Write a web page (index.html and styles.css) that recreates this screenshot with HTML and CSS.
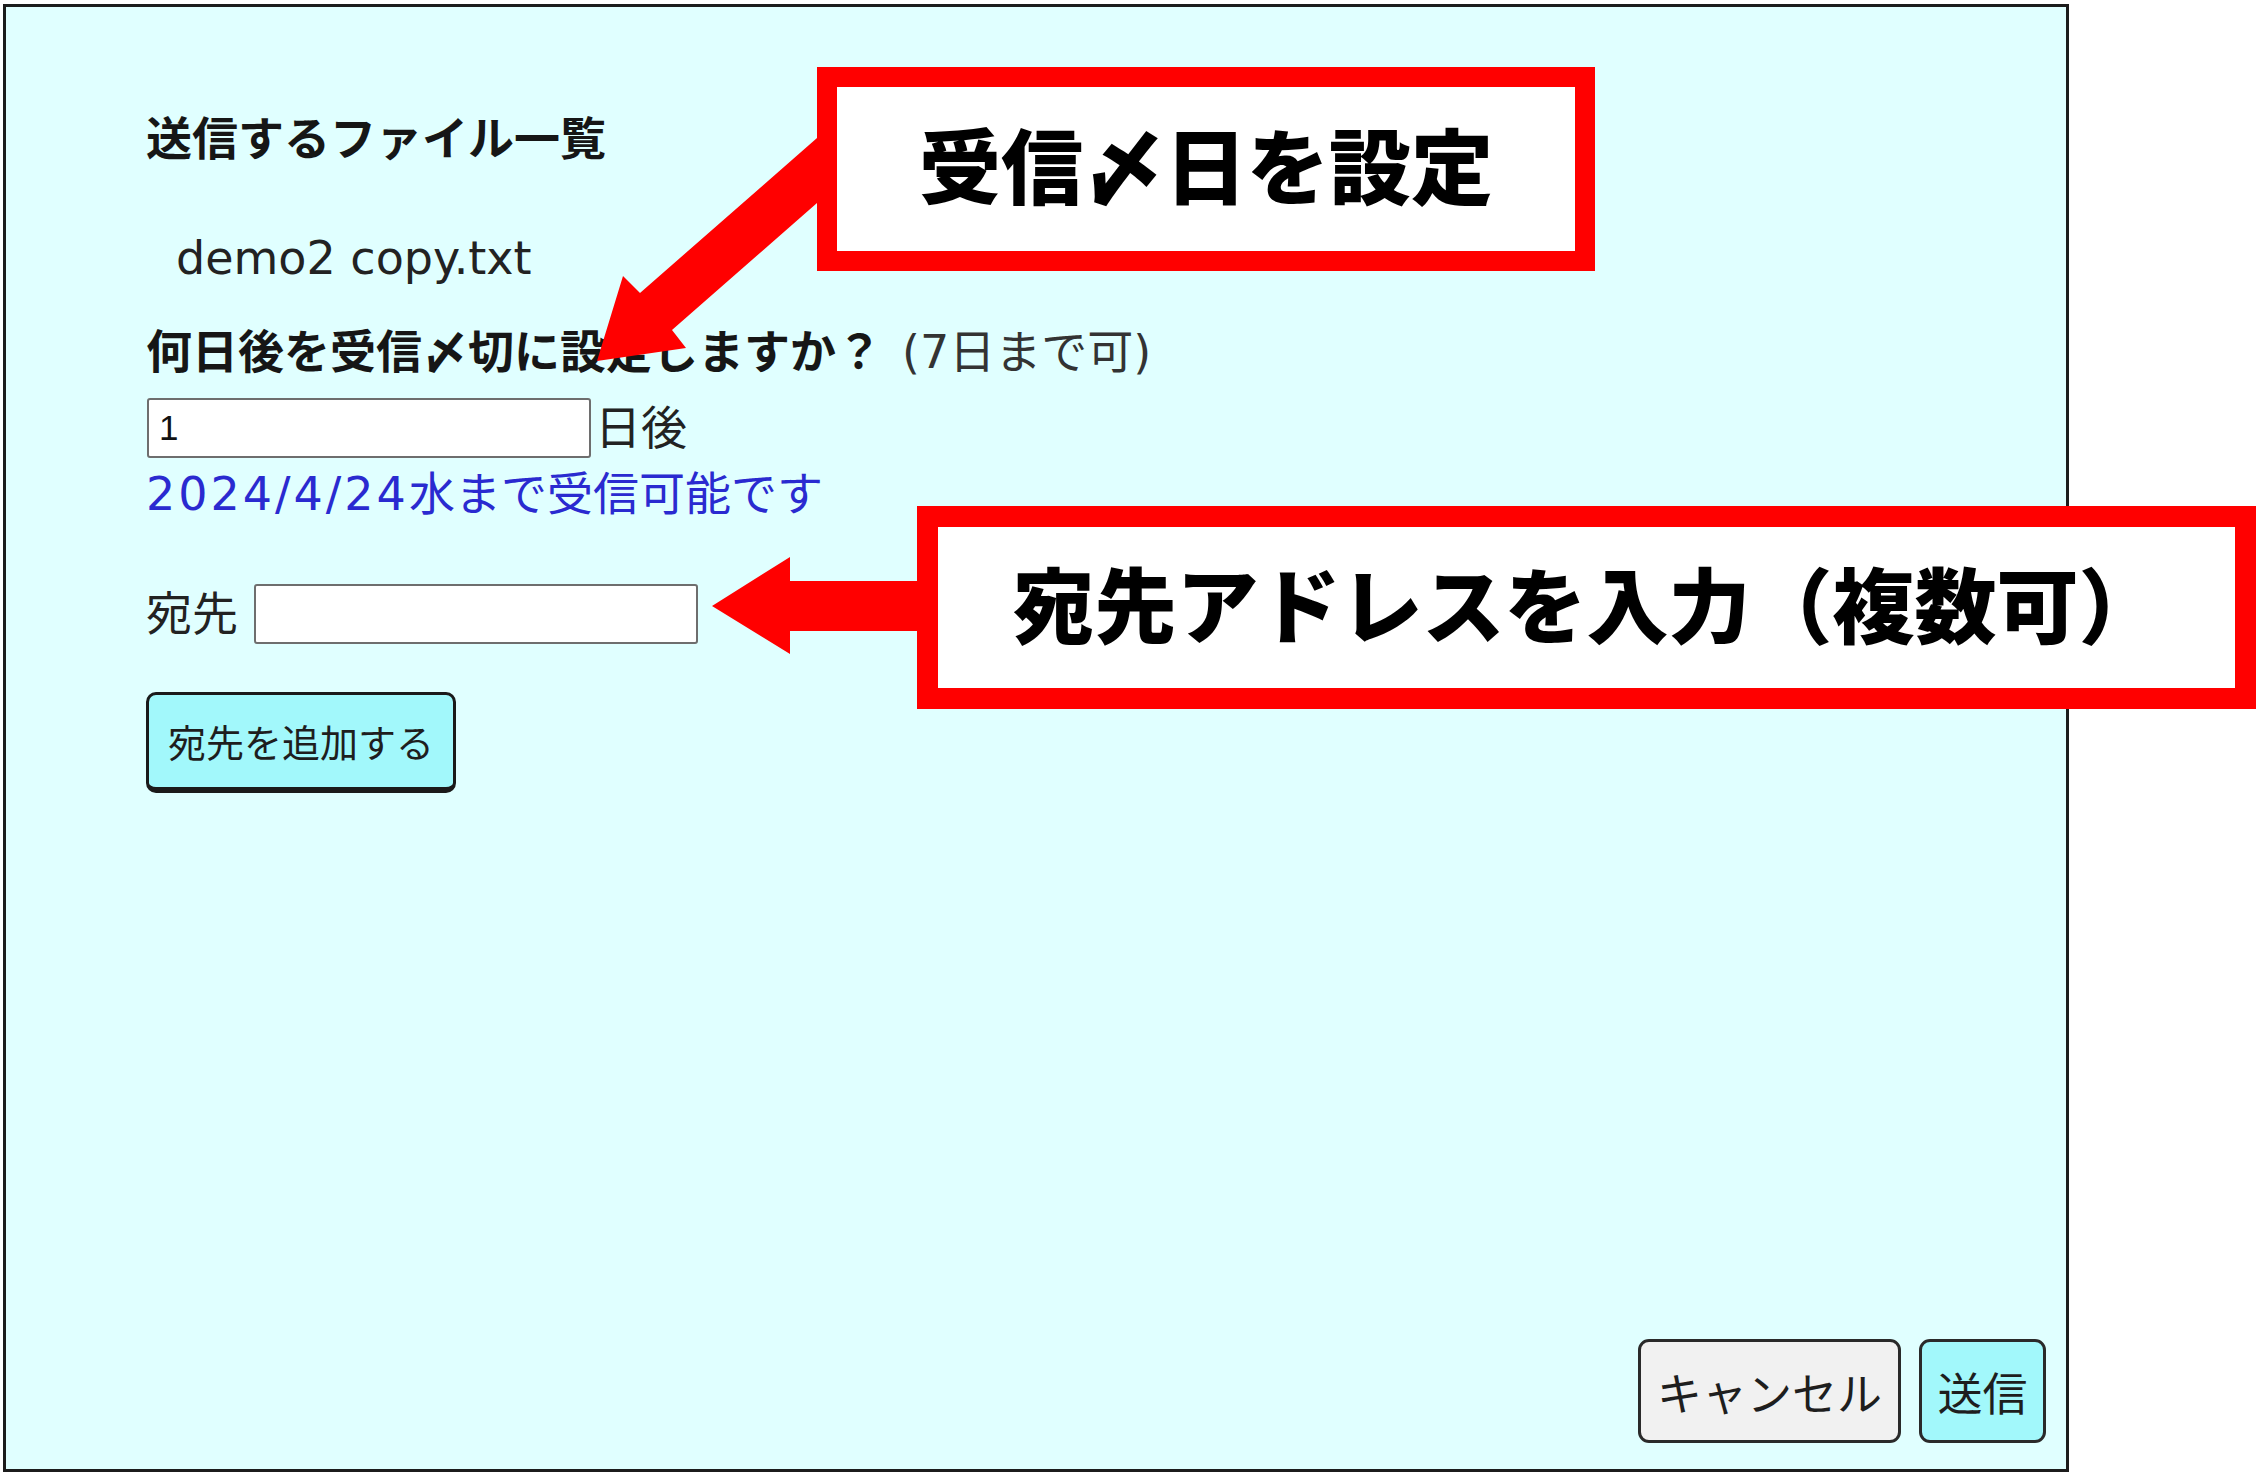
FILE: index.html
```html
<!DOCTYPE html>
<html lang="ja">
<head>
<meta charset="utf-8">
<title>送信</title>
<link rel="stylesheet" href="styles.css">
</head>
<body>
  <div class="panel">
    <div class="content">
      <div class="row title">送信するファイル一覧</div>
      <div class="row files">demo2 copy.txt</div>
      <div class="row question"><b>何日後を受信〆切に設定しますか？</b><span class="note">(7日まで可)</span></div>
      <div class="row days"><input class="field days-field" type="text" value="1"><span>日後</span></div>
      <div class="row deadline"><span class="num">2024/4/24</span>水まで受信可能です</div>
      <div class="row to-row"><label class="to-label">宛先</label><input class="field to-field" type="text"></div>
      <div class="row add-row"><button class="btn add">宛先を追加する</button></div>
    </div>
    <div class="footer">
      <button class="btn cancel">キャンセル</button>
      <button class="btn send">送信</button>
    </div>
  </div>

  <svg class="arrows" width="2259" height="1475" viewBox="0 0 2259 1475">
    <polygon fill="#ff0000" points="817,138 640,293 623,276 597,361 686,348 672,330 817,203"/>
    <polygon fill="#ff0000" points="712,606 790,557 790,581 925,581 925,631 790,631 790,654"/>
  </svg>
  <div class="callout c1">受信〆日を設定</div>
  <div class="callout c2">宛先アドレスを入力（複数可）</div>
</body>
</html>
```

FILE: styles.css
```css
html, body {
  margin: 0;
  padding: 0;
  background: #ffffff;
}
body {
  position: relative;
  width: 2259px;
  height: 1475px;
  overflow: hidden;
  font-family: "DejaVu Sans", "Noto Sans CJK JP", sans-serif;
  color: #1e1e1e;
}
.panel {
  margin: 4px 0 0 3px;
  width: 2060px;
  height: 1462px;
  border: 3px solid #1c1c1c;
  background: #e0ffff;
  display: flex;
  flex-direction: column;
}
.content {
  flex: 1;
  display: flex;
  flex-direction: column;
  padding: 103px 0 0 140px;
}
.row {
  display: flex;
  align-items: center;
  font-size: 46px;
  line-height: 1;
  white-space: nowrap;
}
.title {
  height: 58px;
  font-weight: 700;
  color: #161616;
}
.files {
  height: 58px;
  margin-top: 61px;
  padding-left: 30px;
  color: #222;
}
.question {
  height: 58px;
  margin-top: 36px;
}
.question b {
  font-weight: 700;
  color: #161616;
}
.note {
  margin-left: 20px;
  color: #333;
}
.days {
  height: 60px;
  margin-top: 17px;
}
.field {
  box-sizing: border-box;
  height: 60px;
  border: 2px solid #6e6e6e;
  border-radius: 3px;
  background: #ffffff;
  font-family: "Liberation Sans", sans-serif;
  font-size: 35px;
  color: #111;
  padding: 0 10px;
  margin: 0;
}
.days-field {
  width: 444px;
  margin-left: 1px;
  margin-right: 4px;
}
.days span {
  color: #222;
}
.deadline {
  height: 58px;
  margin-top: 7px;
  color: #2a2ad0;
}
.num {
  letter-spacing: 3px;
}
.to-row {
  height: 60px;
  margin-top: 61px;
}
.to-label {
  color: #222;
  margin-right: 16px;
}
.to-field {
  width: 444px;
}
.add-row {
  margin-top: 48px;
}
.btn {
  font-family: "Noto Sans CJK JP", sans-serif;
  color: #1e1e1e;
  margin: 0;
  cursor: pointer;
  line-height: 1;
}
.add {
  box-sizing: border-box;
  width: 310px;
  height: 101px;
  font-size: 38px;
  background: #a2f8fb;
  border: 3px solid #1a1a1a;
  border-bottom-width: 6px;
  border-radius: 10px;
  padding: 0;
}
.footer {
  display: flex;
  justify-content: flex-end;
  gap: 18px;
  padding: 0 20px 26px 0;
}
.cancel, .send {
  box-sizing: border-box;
  height: 104px;
  font-size: 45px;
  border: 3px solid #2a2a2a;
  border-radius: 11px;
  padding: 0 15px;
}
.cancel {
  width: 263px;
  background: #f1f1f1;
}
.send {
  width: 127px;
  background: #a2f8fb;
}
.arrows {
  position: absolute;
  left: 0;
  top: 0;
  pointer-events: none;
}
.callout {
  position: absolute;
  box-sizing: border-box;
  background: #ffffff;
  border: 20px solid #ff0000;
  display: flex;
  align-items: center;
  justify-content: center;
  font-family: "Noto Sans CJK JP", sans-serif;
  font-weight: 900;
  font-size: 82px;
  line-height: 1;
  color: #000;
  white-space: nowrap;
  padding-bottom: 12px;
}
.c1 {
  left: 817px;
  top: 67px;
  width: 778px;
  height: 204px;
}
.c2 {
  left: 917px;
  top: 506px;
  width: 1339px;
  height: 203px;
  border-width: 21px;
}
```
